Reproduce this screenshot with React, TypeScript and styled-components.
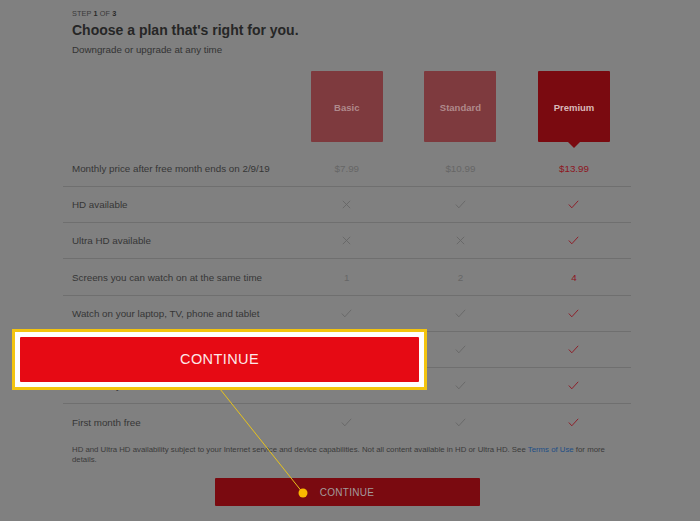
import React from "react";
import styled, { createGlobalStyle } from "styled-components";

const Global = createGlobalStyle`
  html, body { margin: 0; padding: 0; background: #808080; }
  body { font-family: "Liberation Sans", Arial, sans-serif; }
`;

const Page = styled.div`
  position: relative;
  width: 700px;
  height: 521px;
  overflow: hidden;
  background: #808080;
`;

const Content = styled.div`
  margin-left: 63px;
  width: 568px;
  padding-top: 9px;
  display: flex;
  flex-direction: column;
`;

const Header = styled.div`
  padding-left: 9px;
  display: flex;
  flex-direction: column;
`;

const Step = styled.div`
  font-size: 7.3px;
  line-height: 9px;
  color: #3a3a3a;
  letter-spacing: 0.1px;
  b { font-weight: 700; color: #2a2a2a; }
`;

const Title = styled.h1`
  margin: 3px 0 0;
  font-size: 14px;
  line-height: 19px;
  font-weight: 700;
  color: #262626;
`;

const Subtitle = styled.div`
  margin-top: 4px;
  font-size: 9.75px;
  line-height: 12px;
  color: #333;
`;

const Grid = styled.div`
  display: grid;
  grid-template-columns: 227px repeat(3, 113.6px);
  align-items: center;
`;

const PlanRow = styled(Grid)`
  margin-top: 15px;
  margin-bottom: 9px;
`;

const PlanBox = styled.div<{ $active?: boolean }>`
  position: relative;
  justify-self: center;
  width: 72px;
  height: 71px;
  border-radius: 1px;
  background: ${(p) => (p.$active ? "#7a0a10" : "#7e3a3e")};
  color: ${(p) => (p.$active ? "#d9b9b9" : "#b08a8c")};
  font-size: 9.5px;
  font-weight: 700;
  padding-top: 1px;
  box-sizing: border-box;
  display: flex;
  align-items: center;
  justify-content: center;
  &::after {
    content: "";
    display: ${(p) => (p.$active ? "block" : "none")};
    position: absolute;
    left: 50%;
    bottom: -6px;
    margin-left: -6px;
    border-left: 6px solid transparent;
    border-right: 6px solid transparent;
    border-top: 6px solid #7a0a10;
  }
`;

const Row = styled(Grid)<{ $last?: boolean }>`
  box-sizing: border-box;
  height: 36.17px;
  border-bottom: ${(p) => (p.$last ? "none" : "1px solid #6f6f6f")};
`;

const Label = styled.div`
  padding-left: 9px;
  font-size: 9.8px;
  color: #363636;
  white-space: nowrap;
`;

const Cell = styled.div<{ $active?: boolean }>`
  display: flex;
  justify-content: center;
  align-items: center;
  font-size: 9.8px;
  color: ${(p) => (p.$active ? "#8e1520" : "#666")};
`;

const Footnote = styled.p`
  margin: 5px 0 0;
  padding-left: 9px;
  width: 548px;
  font-size: 7.8px;
  line-height: 10px;
  color: #3a3a3a;
  a { color: #1d4e86; text-decoration: none; }
`;

const BottomButton = styled.button`
  align-self: center;
  margin-top: 13px;
  width: 265px;
  height: 28px;
  border: none;
  border-radius: 1px;
  background: #7a0a10;
  color: #a39a9b;
  font-family: "Liberation Sans", Arial, sans-serif;
  font-size: 10px;
  letter-spacing: 0.3px;
`;

const Callout = styled.div`
  position: absolute;
  left: 12px;
  top: 329px;
  width: 415px;
  height: 61px;
  box-sizing: border-box;
  border: 3px solid #f3c40f;
  background: #fff;
  padding: 5px;
  display: flex;
`;

const CalloutButton = styled.div`
  flex: 1;
  background: #e60a14;
  border-radius: 1px;
  display: flex;
  align-items: center;
  justify-content: center;
  color: #fde8e8;
  font-size: 14.5px;
  letter-spacing: 0.4px;
  padding-bottom: 2px;
`;

const Pointer = styled.svg`
  position: absolute;
  left: 0;
  top: 0;
  pointer-events: none;
`;

const Check = ({ color }: { color: string }) => (
  <svg width="11" height="9" viewBox="0 0 11 9">
    <polyline points="0.8,4.5 3.8,7.8 10.2,0.8" fill="none" stroke={color} strokeWidth="0.9" />
  </svg>
);

const Cross = ({ color }: { color: string }) => (
  <svg width="9" height="9" viewBox="0 0 9 9">
    <path d="M0.8 0.8 L8.2 8.2 M8.2 0.8 L0.8 8.2" fill="none" stroke={color} strokeWidth="0.9" />
  </svg>
);

type V = "check" | "cross" | string;

const rows: { label: string; values: V[] }[] = [
  { label: "HD available", values: ["cross", "check", "check"] },
  { label: "Ultra HD available", values: ["cross", "cross", "check"] },
  { label: "Screens you can watch on at the same time", values: ["1", "2", "4"] },
  { label: "Watch on your laptop, TV, phone and tablet", values: ["check", "check", "check"] },
  { label: "Unlimited movies and TV shows", values: ["check", "check", "check"] },
  { label: "Cancel anytime", values: ["check", "check", "check"] },
  { label: "First month free", values: ["check", "check", "check"] },
];

const renderValue = (v: V, active: boolean) => {
  const color = active ? "#8e1520" : "#676767";
  if (v === "check") return <Check color={color} />;
  if (v === "cross") return <Cross color={color} />;
  return v;
};

export default function App() {
  return (
    <Page>
      <Global />
      <Content>
        <Header>
          <Step>
            STEP <b>1</b> OF <b>3</b>
          </Step>
          <Title>Choose a plan that's right for you.</Title>
          <Subtitle>Downgrade or upgrade at any time</Subtitle>
        </Header>
        <PlanRow>
          <div />
          <PlanBox>Basic</PlanBox>
          <PlanBox>Standard</PlanBox>
          <PlanBox $active>Premium</PlanBox>
        </PlanRow>
        <Row>
          <Label>Monthly price after free month ends on 2/9/19</Label>
          <Cell>$7.99</Cell>
          <Cell>$10.99</Cell>
          <Cell $active>$13.99</Cell>
        </Row>
        {rows.map((r, i) => (
          <Row key={r.label} $last={i === rows.length - 1}>
            <Label>{r.label}</Label>
            {r.values.map((v, j) => (
              <Cell key={j} $active={j === 2}>
                {renderValue(v, j === 2)}
              </Cell>
            ))}
          </Row>
        ))}
        <Footnote>
          HD and Ultra HD availability subject to your Internet service and device capabilities. Not all
          content available in HD or Ultra HD. See <a href="#">Terms of Use</a> for more details.
        </Footnote>
        <BottomButton>CONTINUE</BottomButton>
      </Content>
      <Pointer width="700" height="521" viewBox="0 0 700 521">
        <line x1="220" y1="389" x2="303" y2="493" stroke="#e6c21c" strokeWidth="1" />
        <circle cx="303" cy="493" r="4.5" fill="#fbb800" />
      </Pointer>
      <Callout>
        <CalloutButton>CONTINUE</CalloutButton>
      </Callout>
    </Page>
  );
}
